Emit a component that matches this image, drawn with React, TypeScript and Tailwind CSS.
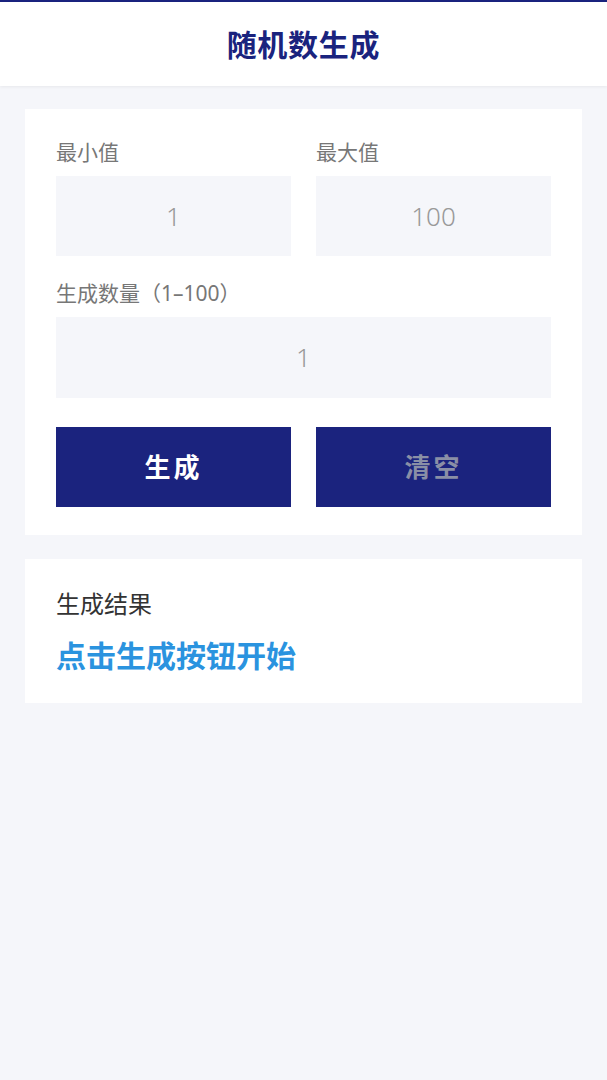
export default function App() {
  return (
    <div
      className="flex min-h-[1080px] w-full flex-col bg-[#f5f6fa]"
      style={{ fontFamily: '"Noto Sans", "Noto Sans CJK SC", sans-serif' }}
    >
      <div className="h-[2px] bg-[#1a237e]" />
      <header className="flex h-[84px] items-center justify-center bg-white shadow-[0_1px_3px_rgba(0,0,0,0.06)]">
        <h1 className="text-[30px] font-bold tracking-wide text-[#1a237e]">随机数生成</h1>
      </header>

      <div className="flex flex-col gap-6 px-[25px] pt-[23px]">
        <section className="bg-white px-[31px] pt-[28px] pb-[28px]">
          <div className="grid grid-cols-2 gap-[25px]">
            <div>
              <label className="block text-[21px] leading-[30px] text-[#777]">最小值</label>
              <div className="mt-[9px] flex h-[80px] items-center justify-center bg-[#f5f6fa] text-[26px] font-light text-[#999]">
                1
              </div>
            </div>
            <div>
              <label className="block text-[21px] leading-[30px] text-[#777]">最大值</label>
              <div className="mt-[9px] flex h-[80px] items-center justify-center bg-[#f5f6fa] text-[26px] font-light text-[#999]">
                100
              </div>
            </div>
          </div>

          <label className="mt-[22px] block text-[21px] leading-[30px] text-[#777]">生成数量（1–100）</label>
          <div className="mt-[9px] flex h-[81px] items-center justify-center bg-[#f5f6fa] text-[26px] font-light text-[#999]">
            1
          </div>

          <div className="mt-[29px] grid grid-cols-2 gap-[25px]">
            <button className="flex h-[80px] items-center justify-center bg-[#1b237e] text-[26px] font-bold tracking-[0.12em] text-white">
              生成
            </button>
            <button className="flex h-[80px] items-center justify-center bg-[#1b237e] text-[26px] font-bold tracking-[0.12em] text-[#8a8fa6]">
              清空
            </button>
          </div>
        </section>

        <section className="bg-white px-[31px] pt-[30px] pb-[27px]">
          <div className="text-[24px] leading-[30px] text-[#333]">生成结果</div>
          <div className="mt-[17px] text-[30px] leading-[40px] font-bold text-[#2a93df]">点击生成按钮开始</div>
        </section>
      </div>
    </div>
  );
}
